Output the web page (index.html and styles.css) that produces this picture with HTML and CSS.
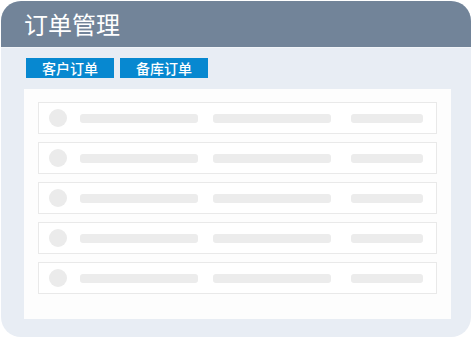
FILE: index.html
```html
<!DOCTYPE html>
<html lang="zh">
  <head>
    <meta charset="UTF-8" />
    <meta name="viewport" content="width=device-width, initial-scale=1.0" />
    <title>订单管理</title>
    <link rel="stylesheet" href="styles.css">
  </head>
  <body>
    <div class="card">
      <div class="card-header">订单管理</div>
      <div class="tabs">
        <div class="tab">客户订单</div>
        <div class="tab">备库订单</div>
      </div>
      <div class="panel">
        <div class="row">
          <span class="dot"></span>
          <span class="bar bar-a"></span>
          <span class="bar bar-b"></span>
          <span class="bar bar-c"></span>
        </div>
        <div class="row">
          <span class="dot"></span>
          <span class="bar bar-a"></span>
          <span class="bar bar-b"></span>
          <span class="bar bar-c"></span>
        </div>
        <div class="row">
          <span class="dot"></span>
          <span class="bar bar-a"></span>
          <span class="bar bar-b"></span>
          <span class="bar bar-c"></span>
        </div>
        <div class="row">
          <span class="dot"></span>
          <span class="bar bar-a"></span>
          <span class="bar bar-b"></span>
          <span class="bar bar-c"></span>
        </div>
        <div class="row">
          <span class="dot"></span>
          <span class="bar bar-a"></span>
          <span class="bar bar-b"></span>
          <span class="bar bar-c"></span>
        </div>
      </div>
    </div>
  </body>
</html>
```

FILE: styles.css
```css
body {
  margin: 0;
  padding: 1px;
  background-color: #fff;
  font-family: "Noto Sans CJK SC", "Noto Sans", sans-serif;
}
.card {
  width: 470px;
  height: 336px;
  box-sizing: border-box;
  background-color: #e8edf4;
  border-radius: 20px;
  overflow: hidden;
}
.card-header {
  height: 46px;
  line-height: 46px;
  padding-left: 23px;
  background-color: #728499;
  color: #fff;
  font-size: 24px;
  border-bottom: 1px solid #f1f4f8;
}
.tabs {
  display: flex;
  gap: 6px;
  margin: 10px 0 0 25px;
}
.tab {
  width: 88px;
  height: 20px;
  line-height: 20px;
  text-align: center;
  background-color: #0788d0;
  color: #fff;
  font-size: 14px;
  font-weight: 500;
}
.panel {
  display: flex;
  flex-direction: column;
  gap: 8px;
  width: 427px;
  height: 230px;
  box-sizing: border-box;
  margin: 11px 0 0 23px;
  padding: 13px 14px;
  background-color: #fdfdfd;
}
.row {
  display: flex;
  align-items: center;
  height: 32px;
  box-sizing: border-box;
  padding-left: 10px;
  border: 1px solid #e9e9e9;
  background-color: #fff;
}
.dot {
  width: 18px;
  height: 18px;
  border-radius: 50%;
  background-color: #ebebeb;
}
.bar {
  height: 9px;
  border-radius: 3px;
  background-color: #ececec;
}
.bar-a {
  width: 118px;
  margin-left: 13px;
}
.bar-b {
  width: 118px;
  margin-left: 15px;
}
.bar-c {
  width: 72px;
  margin-left: 20px;
}
```
